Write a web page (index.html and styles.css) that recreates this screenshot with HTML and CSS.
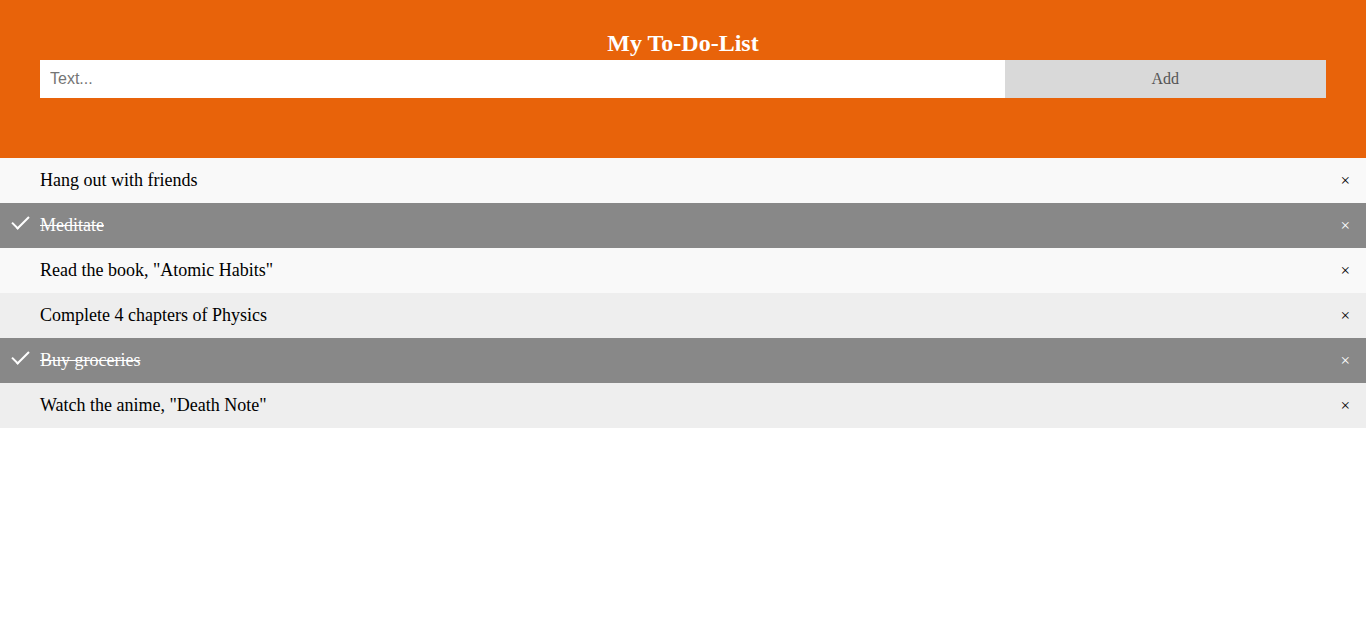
FILE: index.html
```
<!DOCTYPE html>
<html>
<head>
<meta charset="utf-8">
<title>My To-Do-List</title>
<link rel="stylesheet" href="styles.css">
</head>
<body>
<div class="header">
  <h2 class="title">My To-Do-List</h2>
  <div class="add-row">
    <input class="text-input" type="text" placeholder="Text...">
    <div class="add-btn">Add</div>
  </div>
</div>
<ul class="todo-list">
  <li class="item"><span class="label">Hang out with friends</span><span class="close">×</span></li>
  <li class="item checked"><span class="label">Meditate</span><span class="close">×</span></li>
  <li class="item"><span class="label">Read the book, "Atomic Habits"</span><span class="close">×</span></li>
  <li class="item"><span class="label">Complete 4 chapters of Physics</span><span class="close">×</span></li>
  <li class="item checked"><span class="label">Buy groceries</span><span class="close">×</span></li>
  <li class="item"><span class="label">Watch the anime, "Death Note"</span><span class="close">×</span></li>
</ul>
</body>
</html>
```
FILE: styles.css
```
html, body {
  margin: 0;
  padding: 0;
  background: #fff;
  font-family: "Liberation Serif", "Times New Roman", serif;
}

.header {
  background: #e8630a;
  padding: 29px 40px 60px;
  color: #fff;
  text-align: center;
}

.title {
  margin: 0 0 3px;
  font-size: 24px;
  line-height: 28px;
  font-weight: bold;
}

.add-row {
  display: flex;
}

.text-input {
  margin: 0;
  border: none;
  border-radius: 0;
  width: 75%;
  height: 38px;
  box-sizing: border-box;
  padding: 10px;
  font-size: 16px;
  font-family: "Liberation Sans", Arial, sans-serif;
  outline: none;
  color: #000;
  background: #fff;
}

.text-input::placeholder {
  color: #757575;
}

.add-btn {
  width: 25%;
  height: 38px;
  box-sizing: border-box;
  padding: 10px;
  background: #d9d9d9;
  color: #555;
  text-align: center;
  font-size: 16px;
  line-height: 18px;
}

.todo-list {
  margin: 0;
  padding: 0;
}

.item {
  position: relative;
  display: flex;
  align-items: center;
  padding: 12px 0 12px 40px;
  list-style: none;
  background: #eee;
  color: #000;
  font-size: 18px;
  line-height: 21px;
}

.item:nth-child(odd) {
  background: #f9f9f9;
}

.item.checked {
  background: #888;
  color: #fff;
}

.item.checked .label {
  text-decoration: line-through;
}

.item.checked::before {
  content: "";
  position: absolute;
  border-color: #fff;
  border-style: solid;
  border-width: 0 2px 2px 0;
  top: 9px;
  left: 16px;
  transform: rotate(45deg);
  height: 15px;
  width: 7px;
}

.close {
  margin-left: auto;
  padding: 0 16px 0 16px;
  font-size: 17px;
  color: inherit;
}
```
